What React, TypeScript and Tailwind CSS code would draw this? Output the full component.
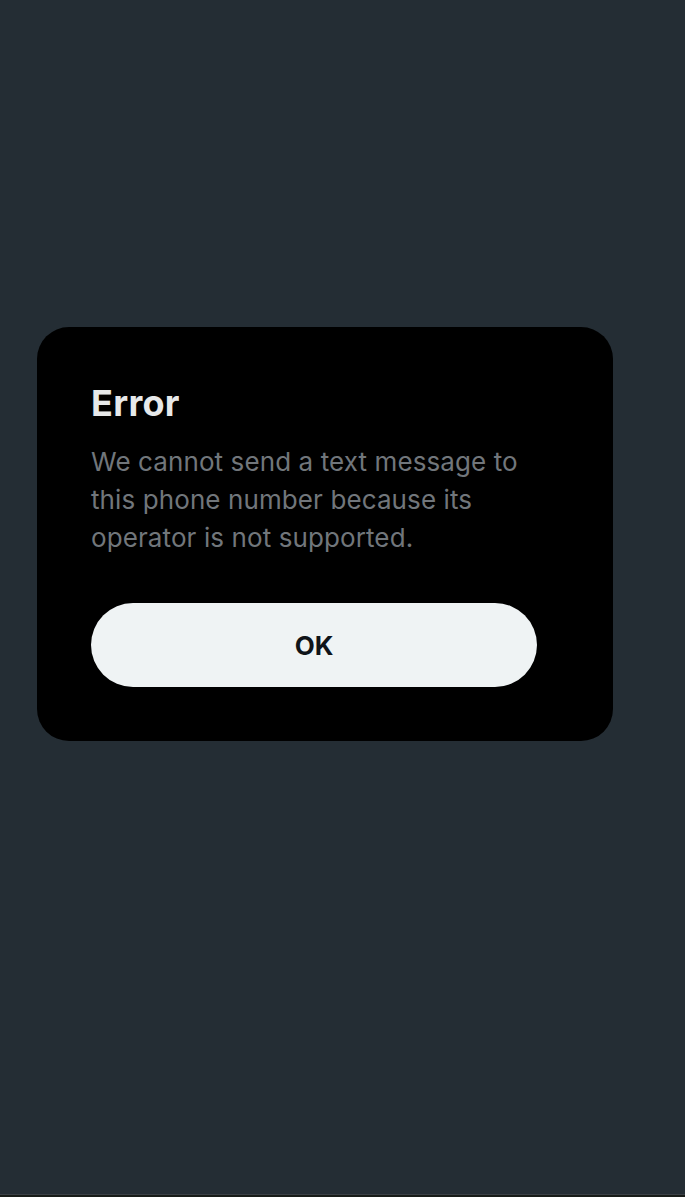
import React from 'react';

export default function App() {
  return (
    <div
      className="w-[685px] h-[1197px] bg-[#242d34] flex flex-col"
      style={{ fontFamily: 'Inter, "Noto Sans", sans-serif' }}
    >
      <div className="flex-1 pt-[327px] pl-[37px]">
        {/* Dialog */}
        <div className="w-[576px] bg-black rounded-[32px] p-[54px]">
          <h1 className="text-[36px] leading-[44px] font-bold text-[#e7e9ea] tracking-[0.3px]">Error</h1>
          <p className="mt-[18px] text-[26px] leading-[38px] text-[#71767b] tracking-[0.1px]">
            We cannot send a text message to this phone number because its operator is not supported.
          </p>
          <button className="mt-[46px] w-[446px] h-[84px] rounded-full bg-[#eff3f4] text-[#0f1419] text-[26px] font-bold flex items-center justify-center">
            OK
          </button>
        </div>
      </div>
      <div className="h-px bg-[#3b4045]" />
      <div className="h-[2px] bg-[#181c18]" />
    </div>
  );
}
